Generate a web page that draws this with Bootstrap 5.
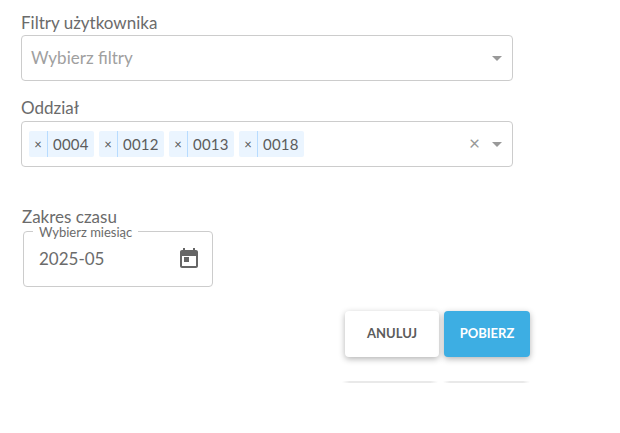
<!DOCTYPE html>
<html lang="pl">
<head>
  <meta charset="UTF-8">
  <meta name="viewport" content="width=device-width, initial-scale=1.0">
  <title>Filtry</title>
  <link href="https://cdn.jsdelivr.net/npm/bootstrap@5.3.0/dist/css/bootstrap.min.css" rel="stylesheet">
  <style>
    body { font-family: Lato, "Liberation Sans", sans-serif; color: #6b6b6b; background: #fff; overflow: hidden; }
    .page-wrap { width: 620px; height: 433px; padding: 12px 90px 0 21px; }
    .field-label { font-size: 17px; line-height: 22px; height: 23px; margin: 0; color: #6b6b6b; }
    .label-gap { margin-top: 16px; height: 24px; }
    .select-box { width: 492px; height: 46px; border: 1px solid #ccc; border-radius: 4px; padding: 0 10px 0 7px; background: #fff; }
    .select-ph { font-size: 17px; color: #a0a0a0; padding-left: 2px; }
    .caret-down { width: 0; height: 0; border-style: solid; border-width: 5px 5px 0 5px; border-color: #999 transparent transparent transparent; margin-left: 12px; }
    .clear-x { font-size: 19px; line-height: 18px; color: #999; margin-bottom: 2px; }
    .tag-item { background: #ebf5ff; border-radius: 2px; height: 26px; font-size: 15px; line-height: 26px; color: #5c5c5c; margin-right: 5px; width: 65px; }
    .tag-x { width: 19px; text-align: center; font-size: 13px; border-right: 1px solid #b8dcff; color: #555; }
    .tag-txt { padding: 0 0 0 5px; letter-spacing: .2px; }
    .time-group { padding-left: 1px; margin-top: 43px; }
    .time-title { font-size: 17px; line-height: 14px; height: 14px; margin: 0; color: #6b6b6b; }
    .month-field { width: 190px; height: 56px; border: 1px solid #ccc; border-radius: 4px; padding: 0 11px 0 15px; margin: 7px 0 0 1px; }
    .month-legend { top: -5px; left: 9px; background: #fff; padding: 0 6px; font-size: 13px; line-height: 11px; color: #6b6b6b; }
    .month-val { font-size: 17px; color: #6b6b6b; }
    .action-row { margin-top: 24px; gap: 5px; }
    .btn-anuluj, .btn-pobierz { height: 46px; border: 0; border-radius: 4px; font-size: 13px; font-weight: 700; box-shadow: 0 2px 6px rgba(0,0,0,.3); padding: 0; }
    .btn-anuluj { width: 94px; background: #fff; color: #5c5c5c; }
    .btn-pobierz { width: 86px; background: #3daee3; color: #fff; }
    .btn-anuluj:hover { background: #fff; color: #5c5c5c; }
    .btn-pobierz:hover { background: #3daee3; color: #fff; }
    .ghost-row { margin-top: 24px; gap: 5px; }
    .ghost-a, .ghost-b { height: 2px; background: linear-gradient(90deg, #fff, #e9e9e9 8%, #e9e9e9 92%, #fff); }
    .ghost-a { width: 96px; }
    .ghost-b { width: 87px; }
  </style>
</head>
<body>
<div class="page-wrap">
  <p class="field-label">Filtry użytkownika</p>
  <div class="select-box d-flex align-items-center">
    <span class="select-ph flex-grow-1">Wybierz filtry</span>
    <span class="caret-down"></span>
  </div>
  <p class="field-label label-gap">Oddział</p>
  <div class="select-box d-flex align-items-center">
    <div class="d-flex flex-grow-1">
      <div class="tag-item d-flex"><span class="tag-x">×</span><span class="tag-txt">0004</span></div>
      <div class="tag-item d-flex"><span class="tag-x">×</span><span class="tag-txt">0012</span></div>
      <div class="tag-item d-flex"><span class="tag-x">×</span><span class="tag-txt">0013</span></div>
      <div class="tag-item d-flex"><span class="tag-x">×</span><span class="tag-txt">0018</span></div>
    </div>
    <span class="clear-x">×</span>
    <span class="caret-down"></span>
  </div>
  <div class="time-group">
    <p class="time-title">Zakres czasu</p>
    <div class="month-field position-relative d-flex align-items-center justify-content-between">
      <span class="month-legend position-absolute">Wybierz miesiąc</span>
      <span class="month-val">2025-05</span>
      <svg width="24" height="24" viewBox="0 0 24 24" fill="#666"><path d="M16 1v2H8V1H6v2H5C3.900 3 3 3.900 3 5v14c0 1.100.9 2 2 2h14c1.100 0 2-.9 2-2V5c0-1.100-.9-2-2-2h-1V1h-2zM5 9h14v10H5V9zm2 1v5h5v-5H7z" fill-rule="evenodd"/></svg>
    </div>
  </div>
  <div class="action-row d-flex justify-content-end">
    <button class="btn btn-anuluj" type="button">ANULUJ</button>
    <button class="btn btn-pobierz" type="button">POBIERZ</button>
  </div>
  <div class="ghost-row d-flex justify-content-end">
    <div class="ghost-a"></div>
    <div class="ghost-b"></div>
  </div>
</div>
<script src="https://cdn.jsdelivr.net/npm/bootstrap@5.3.0/dist/js/bootstrap.bundle.min.js"></script>
</body>
</html>
